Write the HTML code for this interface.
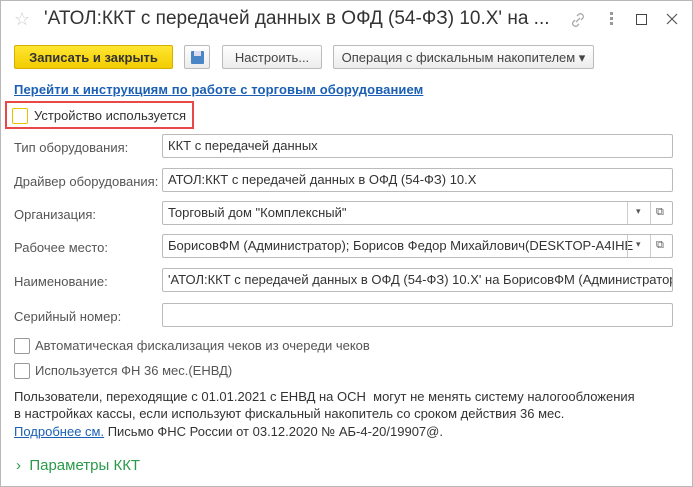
<html><head><style>
body{margin:0;width:693px;height:487px;background:#fff;font-family:"Liberation Sans",sans-serif;font-size:13px;color:#333;position:relative;overflow:hidden}
.a{position:absolute;white-space:nowrap}
.win{position:absolute;left:0;top:0;width:691px;height:485px;border:1px solid #b8b8b8}
.btn{position:absolute;top:45px;height:24px;border:1px solid #bbb;border-radius:2px;background:linear-gradient(#fff,#ececec);line-height:24px;text-align:center;box-sizing:border-box;color:#444}
.lab{position:absolute;left:14px;color:#555}
.inp{position:absolute;left:162px;width:511px;height:24px;border:1px solid #bbb;border-radius:2px;box-sizing:border-box;line-height:22px;padding-left:5px;color:#333;overflow:hidden;white-space:nowrap}
.cb{position:absolute;width:14px;height:14px;border:1px solid #999;border-radius:2px;background:#fff}
</style></head><body>
<div class="win"></div>
<div class="a" style="left:14px;top:9px;font-size:18px;color:#ccc">☆</div>
<div class="a" style="left:44px;top:8px;font-size:19px;color:#333">'АТОЛ:ККТ с передачей данных в ОФД (54-ФЗ) 10.Х' на ...</div>
<svg class="a" style="left:569px;top:11px" width="18" height="18" viewBox="0 0 18 18" fill="none" stroke="#aaa" stroke-width="1.3"><path d="M7 11l4-4M8 5l2-2a3 3 0 014 4l-2 2M10 13l-2 2a3 3 0 01-4-4l2-2"/></svg>
<div class="a" style="left:610px;top:12px;width:3px;height:3px;background:#999;box-shadow:0 5px #999,0 10px #999"></div>
<div class="a" style="left:636px;top:14px;width:9px;height:9px;border:1px solid #444"></div>
<svg class="a" style="left:666px;top:13px" width="12" height="12" viewBox="0 0 12 12" stroke="#555" stroke-width="1.2"><path d="M1 1l10 10M11 1L1 11"/></svg>
<div class="btn" style="left:14px;width:159px;background:linear-gradient(#ffe632,#f2cc00);border-color:#d4b000;color:#333;font-weight:bold">Записать и закрыть</div>
<div class="btn" style="left:184px;width:26px"><div style="margin:5px auto;width:13px;height:13px;background:#4a86c5;border-radius:1px;position:relative"><div style="position:absolute;left:3px;top:0;width:7px;height:5px;background:#dde"></div></div></div>
<div class="btn" style="left:222px;width:100px">Настроить...</div>
<div class="btn" style="left:333px;width:261px">Операция с фискальным накопителем ▾</div>
<div class="a" style="left:14px;top:82px;color:#1a5fb4;font-weight:bold;text-decoration:underline;letter-spacing:0.1px">Перейти к инструкциям по работе с торговым оборудованием</div>
<div class="a" style="left:5px;top:101px;width:185px;height:24px;border:2px solid #e84848"></div>
<div class="cb" style="left:12px;top:108px;border-color:#e8c000"></div>
<div class="a" style="left:34px;top:108px">Устройство используется</div>
<div class="lab" style="top:140px">Тип оборудования:</div><div class="inp" style="top:134px">ККТ с передачей данных</div>
<div class="lab" style="top:174px">Драйвер оборудования:</div><div class="inp" style="top:168px">АТОЛ:ККТ с передачей данных в ОФД (54-ФЗ) 10.Х</div>
<div class="lab" style="top:207px">Организация:</div><div class="inp" style="top:201px">Торговый дом "Комплексный"</div>
<div class="lab" style="top:240px">Рабочее место:</div><div class="inp" style="top:234px;padding-right:50px">БорисовФМ (Администратор); Борисов Федор Михайлович(DESKTOP-A4IHE</div>
<div class="a" style="left:627px;top:202px;width:1px;height:22px;background:#ccc"></div><div class="a" style="left:650px;top:202px;width:1px;height:22px;background:#ccc"></div>
<div class="a" style="left:627px;top:235px;width:1px;height:22px;background:#ccc"></div><div class="a" style="left:650px;top:235px;width:1px;height:22px;background:#ccc"></div>
<div class="a" style="left:636px;top:206px;font-size:9px;color:#555">▾</div><div class="a" style="left:656px;top:206px;font-size:11px;color:#555">⧉</div>
<div class="a" style="left:636px;top:239px;font-size:9px;color:#555">▾</div><div class="a" style="left:656px;top:239px;font-size:11px;color:#555">⧉</div>
<div class="lab" style="top:274px">Наименование:</div><div class="inp" style="top:268px">'АТОЛ:ККТ с передачей данных в ОФД (54-ФЗ) 10.Х' на БорисовФМ (Администратор)</div>
<div class="lab" style="top:309px">Серийный номер:</div><div class="inp" style="top:303px"></div>
<div class="cb" style="left:14px;top:338px"></div><div class="a" style="left:35px;top:338px;color:#555">Автоматическая фискализация чеков из очереди чеков</div>
<div class="cb" style="left:14px;top:363px"></div><div class="a" style="left:35px;top:363px;color:#555">Используется ФН 36 мес.(ЕНВД)</div>
<div class="a" style="left:14px;top:389px;color:#333">Пользователи, переходящие с 01.01.2021 с ЕНВД на ОСН&nbsp; могут не менять систему налогообложения</div>
<div class="a" style="left:14px;top:406px;color:#333">в настройках кассы, если используют фискальный накопитель со сроком действия 36 мес.</div>
<div class="a" style="left:14px;top:424px;color:#333"><span style="color:#1a5fb4;text-decoration:underline">Подробнее см.</span> Письмо ФНС России от 03.12.2020 № АБ-4-20/19907@.</div>
<div class="a" style="left:16px;top:457px;font-size:15px;color:#2a9a4a">›&nbsp; Параметры ККТ</div>
</body></html>
